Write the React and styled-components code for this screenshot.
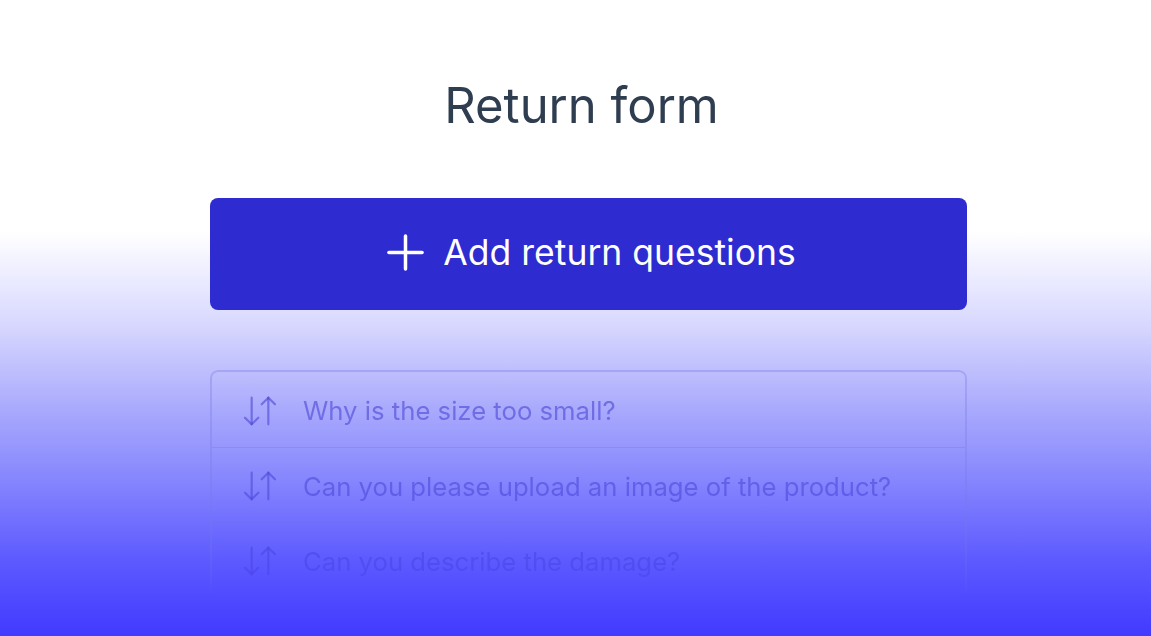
import React from "react";
import styled, { createGlobalStyle } from "styled-components";

const Global = createGlobalStyle`
  html, body { margin: 0; padding: 0; }
  body {
    width: 1151px;
    height: 636px;
    overflow: hidden;
    font-family: Inter, "Noto Sans", "Liberation Sans", sans-serif;
    background: linear-gradient(
      to bottom,
      #ffffff 0px,
      #ffffff 232px,
      #d9d9ff 322px,
      #a9a9fd 410px,
      #8383fe 485px,
      #5d5aff 560px,
      #423aff 636px
    );
  }
`;

const Page = styled.main`
  display: flex;
  flex-direction: column;
  align-items: center;
  padding: 77px 0 0 26px;
  box-sizing: border-box;
  height: 636px;
  overflow: hidden;
`;

const Title = styled.h1`
  margin: 0 14px 0 0;
  font-size: 49px;
  line-height: 58px;
  font-weight: 400;
  color: #2f3d50;
`;

const Column = styled.div`
  width: 757px;
  display: flex;
  flex-direction: column;
`;

const AddButton = styled.button`
  margin-top: 63px;
  height: 112px;
  border: none;
  border-radius: 8px;
  background: #2e2bd0;
  color: #ffffff;
  font-family: inherit;
  font-size: 35.5px;
  font-weight: 400;
  display: flex;
  align-items: center;
  justify-content: center;
  gap: 19px;
  padding: 0 0 4px 6px;
  cursor: pointer;
`;

const List = styled.ul`
  list-style: none;
  margin: 60px 0 0;
  padding: 0;
  border: 2px solid rgba(120, 120, 230, 0.35);
  border-radius: 8px;
  -webkit-mask-image: linear-gradient(to bottom, #000 0%, rgba(0,0,0,0.75) 68%, rgba(0,0,0,0.5) 88%, rgba(0,0,0,0) 100%);
  mask-image: linear-gradient(to bottom, #000 0%, rgba(0,0,0,0.75) 68%, rgba(0,0,0,0.5) 88%, rgba(0,0,0,0) 100%);
`;

const Row = styled.li`
  height: 75px;
  display: flex;
  align-items: center;
  gap: 23px;
  padding: 2px 0 0 28px;
  box-sizing: border-box;
  border-top: ${(p) => (p.$first ? "none" : "1.5px solid rgba(110, 110, 225, 0.3)")};
  color: rgba(58, 52, 205, 0.55);
  font-size: 25.7px;
`;

const SortIcon = ({ size = 40 }) => (
  <svg width={size} height={size} viewBox="0 0 24 24" fill="none" stroke="currentColor" strokeWidth="1.3" strokeLinecap="round" strokeLinejoin="round">
    <path d="m3 16 4 4 4-4" />
    <path d="M7 20V4" />
    <path d="m21 8-4-4-4 4" />
    <path d="M17 4v16" />
  </svg>
);

const PlusIcon = () => (
  <svg width="37" height="37" viewBox="0 0 38 38" fill="none" stroke="currentColor" strokeWidth="3.6" strokeLinecap="round">
    <path d="M19 2v34" />
    <path d="M2 19h34" />
  </svg>
);

const questions = [
  "Why is the size too small?",
  "Can you please upload an image of the product?",
  "Can you describe the damage?",
];

export default function App() {
  return (
    <>
      <Global />
      <Page>
        <Title>Return form</Title>
        <Column>
          <AddButton>
            <PlusIcon />
            <span>Add return questions</span>
          </AddButton>
          <List>
            {questions.map((q, i) => (
              <Row key={q} $first={i === 0}>
                <SortIcon />
                <span>{q}</span>
              </Row>
            ))}
          </List>
        </Column>
      </Page>
    </>
  );
}
